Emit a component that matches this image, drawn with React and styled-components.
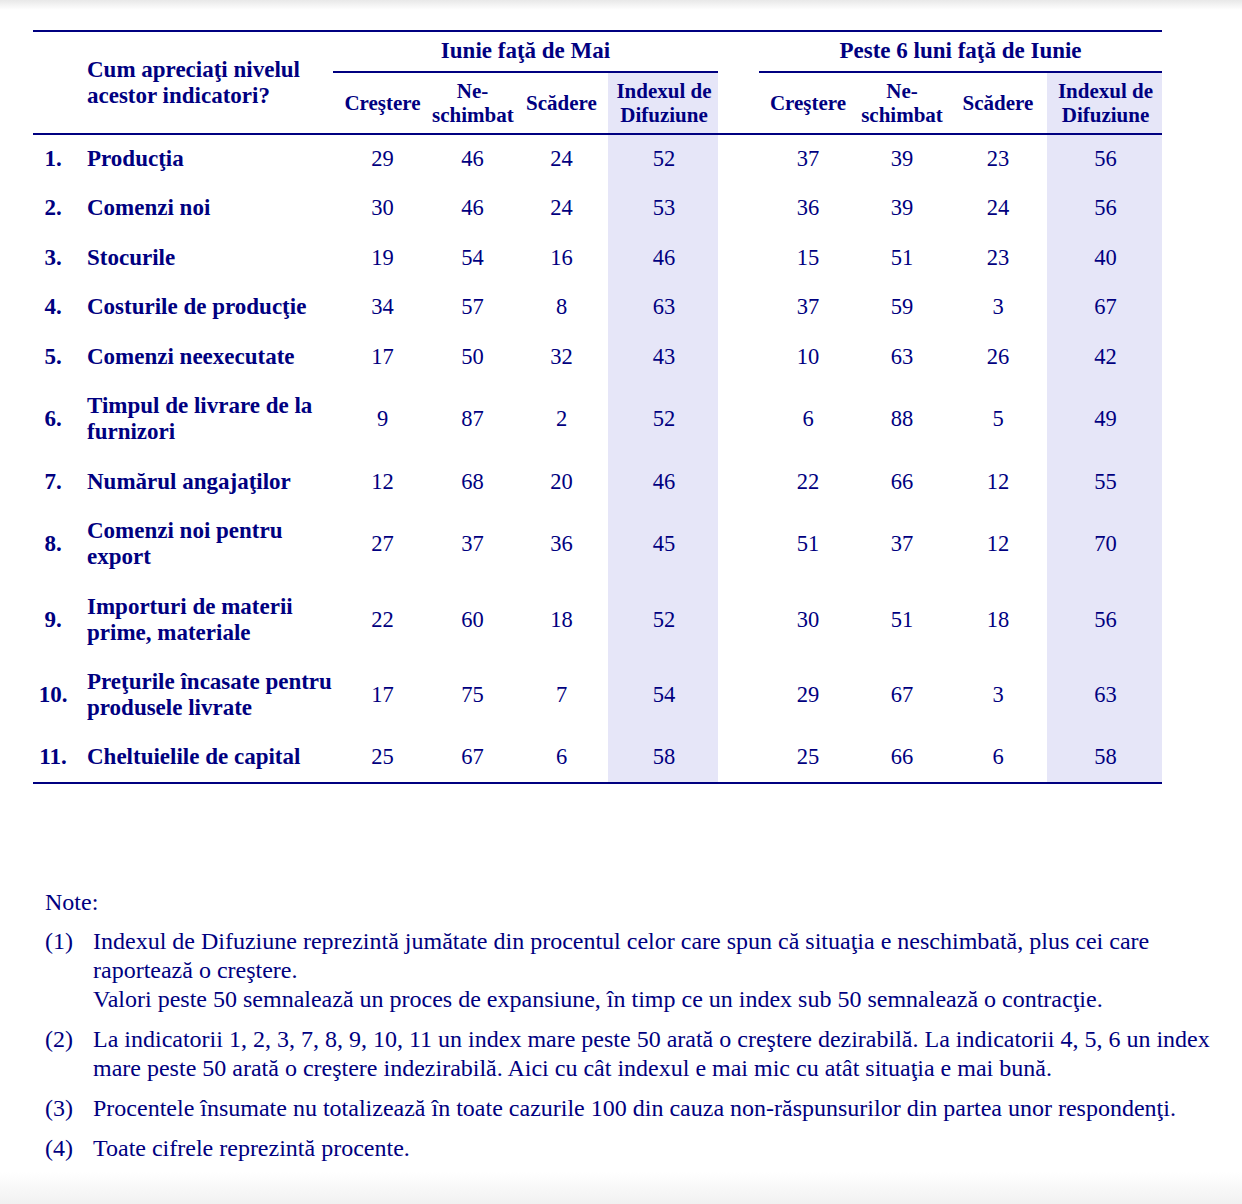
import React from "react";
import styled, { createGlobalStyle } from "styled-components";

const navy = "#000080";
const shade = "#e6e6f8";

const rows = [
  ["1.", "Producţia", [29, 46, 24, 52], [37, 39, 23, 56]],
  ["2.", "Comenzi noi", [30, 46, 24, 53], [36, 39, 24, 56]],
  ["3.", "Stocurile", [19, 54, 16, 46], [15, 51, 23, 40]],
  ["4.", "Costurile de producţie", [34, 57, 8, 63], [37, 59, 3, 67]],
  ["5.", "Comenzi neexecutate", [17, 50, 32, 43], [10, 63, 26, 42]],
  ["6.", "Timpul de livrare de la furnizori", [9, 87, 2, 52], [6, 88, 5, 49], true],
  ["7.", "Numărul angajaţilor", [12, 68, 20, 46], [22, 66, 12, 55]],
  ["8.", "Comenzi noi pentru export", [27, 37, 36, 45], [51, 37, 12, 70], true],
  ["9.", "Importuri de materii prime, materiale", [22, 60, 18, 52], [30, 51, 18, 56], true],
  ["10.", "Preţurile încasate pentru produsele livrate", [17, 75, 7, 54], [29, 67, 3, 63], true],
  ["11.", "Cheltuielile de capital", [25, 67, 6, 58], [25, 66, 6, 58]],
];

const subHeads = ["Creştere", "Ne-\nschimbat", "Scădere", "Indexul de\nDifuziune"];

const notes = [
  [
    "(1)",
    "Indexul de Difuziune reprezintă jumătate din procentul celor care spun că situaţia e neschimbată, plus cei care raportează o creştere.",
    "Valori peste 50 semnalează un proces de expansiune, în timp ce un index sub 50 semnalează o contracţie.",
  ],
  [
    "(2)",
    "La indicatorii 1, 2, 3, 7, 8, 9, 10, 11 un index mare peste 50 arată o creştere dezirabilă. La indicatorii 4, 5, 6 un index mare peste 50 arată o creştere indezirabilă. Aici cu cât indexul e mai mic cu atât situaţia e mai bună.",
  ],
  [
    "(3)",
    "Procentele însumate nu totalizează în toate cazurile 100 din cauza non-răspunsurilor din partea unor respondenţi.",
  ],
  ["(4)", "Toate cifrele reprezintă procente."],
];

const GlobalStyle = createGlobalStyle`
  html, body {
    margin: 0;
    padding: 0;
    background: #ffffff;
  }
`;

const Page = styled.div`
  box-sizing: border-box;
  height: 1204px;
  padding: 30px 0 0 33px;
  font-family: "Liberation Serif", "Times New Roman", serif;
  color: ${navy};
  background: linear-gradient(
    to bottom,
    #e8e8e8 0px,
    #ffffff 10px,
    #ffffff 1172px,
    #f1f1f1 1204px
  );
  overflow: hidden;
`;

const Table = styled.table`
  border-collapse: collapse;
  table-layout: fixed;
  width: 1129px;
  border-top: 2px solid ${navy};
  border-bottom: 2px solid ${navy};
`;

const HeadRow = styled.tr`
  height: ${(p) => p.$h}px;
`;

const QuestionCell = styled.th`
  text-align: left;
  vertical-align: middle;
  padding: 0 0 0 14px;
  font-size: 23px;
  line-height: 26px;
  font-weight: bold;
  border-bottom: 2px solid ${navy};
`;

const BlankHead = styled.th`
  padding: 0;
  border-bottom: ${(p) => (p.$ruled ? `2px solid ${navy}` : "none")};
`;

const GroupCell = styled.th`
  padding: 0 0 1px;
  font-size: 23px;
  font-weight: bold;
  text-align: center;
  vertical-align: middle;
  border-bottom: 2px solid ${navy};
`;

const SubCell = styled.th`
  padding: 0 0 0 2px;
  font-size: 21px;
  line-height: 24px;
  font-weight: bold;
  text-align: center;
  vertical-align: middle;
  white-space: pre-line;
  background: ${(p) => (p.$shaded ? shade : "transparent")};
  border-bottom: 2px solid ${navy};
`;

const Row = styled.tr`
  height: ${(p) => (p.$tall ? 75.5 : 49.5)}px;
`;

const NumCell = styled.td`
  padding: 0;
  text-align: center;
  font-size: 23px;
  font-weight: bold;
  vertical-align: middle;
`;

const LabelCell = styled.td`
  padding: 0 0 0 14px;
  font-size: 23px;
  line-height: 26px;
  font-weight: bold;
  vertical-align: middle;
`;

const ValueCell = styled.td`
  padding: 0 0 0 2px;
  text-align: center;
  font-size: 22.5px;
  vertical-align: middle;
  background: ${(p) => (p.$shaded ? shade : "transparent")};
`;

const GapCell = styled.td`
  padding: 0;
`;

const Notes = styled.div`
  margin: 104px 0 0 12px;
  width: 1175px;
  font-size: 24px;
  line-height: 29px;
`;

const NoteTitle = styled.div`
  margin-bottom: 10px;
`;

const NoteItem = styled.div`
  display: grid;
  grid-template-columns: 48px 1fr;
  margin-bottom: 11px;
`;

const NoteText = styled.div`
  display: flex;
  flex-direction: column;
`;

const cols = [40, 260, 97, 83, 95, 110, 41, 96, 92, 100, 115];

export default function App() {
  return (
    <Page>
      <GlobalStyle />
      <Table>
        <colgroup>
          {cols.map((w, i) => (
            <col key={i} style={{ width: w }} />
          ))}
        </colgroup>
        <thead>
          <HeadRow $h={41}>
            <BlankHead rowSpan={2} $ruled />
            <QuestionCell rowSpan={2}>
              Cum apreciaţi nivelul
              <br />
              acestor indicatori?
            </QuestionCell>
            <GroupCell colSpan={4}>Iunie faţă de Mai</GroupCell>
            <BlankHead rowSpan={2} $ruled />
            <GroupCell colSpan={4}>Peste 6 luni faţă de Iunie</GroupCell>
          </HeadRow>
          <HeadRow $h={62}>
            {subHeads.map((s, i) => (
              <SubCell key={"a" + i} $shaded={i === 3}>
                {s}
              </SubCell>
            ))}
            {subHeads.map((s, i) => (
              <SubCell key={"b" + i} $shaded={i === 3}>
                {s}
              </SubCell>
            ))}
          </HeadRow>
        </thead>
        <tbody>
          {rows.map(([n, label, a, b, tall]) => (
            <Row key={n} $tall={tall}>
              <NumCell>{n}</NumCell>
              <LabelCell>{label}</LabelCell>
              {a.map((v, i) => (
                <ValueCell key={"a" + i} $shaded={i === 3}>
                  {v}
                </ValueCell>
              ))}
              <GapCell />
              {b.map((v, i) => (
                <ValueCell key={"b" + i} $shaded={i === 3}>
                  {v}
                </ValueCell>
              ))}
            </Row>
          ))}
        </tbody>
      </Table>

      <Notes>
        <NoteTitle>Note:</NoteTitle>
        {notes.map(([mark, ...lines]) => (
          <NoteItem key={mark}>
            <span>{mark}</span>
            <NoteText>
              {lines.map((l, i) => (
                <span key={i}>{l}</span>
              ))}
            </NoteText>
          </NoteItem>
        ))}
      </Notes>
    </Page>
  );
}
